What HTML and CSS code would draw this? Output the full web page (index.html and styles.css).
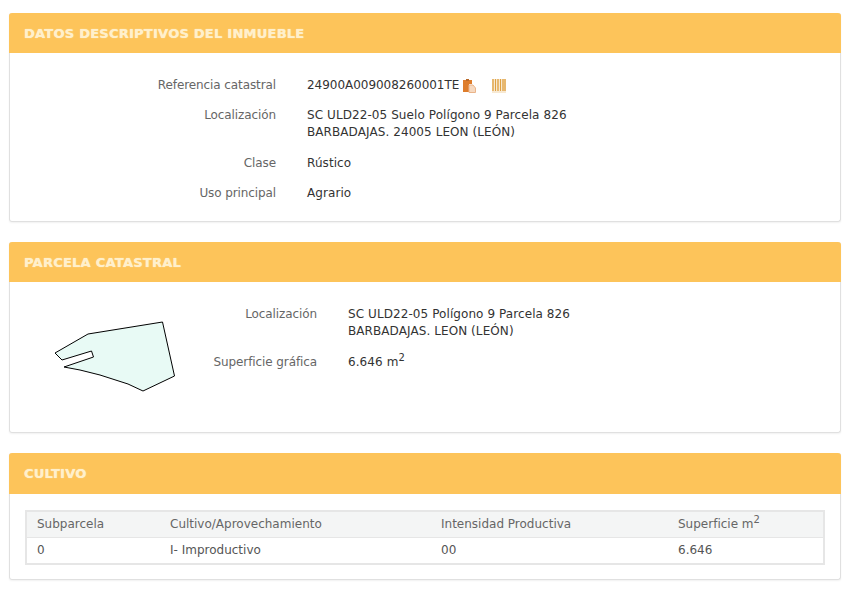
FILE: index.html
```html
<!DOCTYPE html>
<html lang="es">
<head>
<meta charset="UTF-8">
<meta name="viewport" content="width=device-width, initial-scale=1.0">
<title>Datos del inmueble</title>
<link rel="stylesheet" href="styles.css">
</head>
<body>

<!-- Datos descriptivos -->
<section class="panel">
    <h2 class="panel-heading">DATOS DESCRIPTIVOS DEL INMUEBLE</h2>
    <div class="panel-body">
        <dl class="fields fields-wide">
            <dt>Referencia catastral</dt>
            <dd class="ref">24900A009008260001TE
                <svg class="icon icon-copy" width="13" height="14" viewBox="0 0 13 14">
                    <path d="M0 1h9v4H6v8H0z" fill="#de7d2c"/>
                    <path d="M3 0h3v2H3z" fill="#b9692a"/>
                    <path d="M6 6h4l2.500 3v4.500H6z" fill="#f6d9c0" stroke="#eab48a" stroke-width="1"/>
                </svg>
                <svg class="icon icon-barcode" width="14" height="14" viewBox="0 0 14 14">
                    <path d="M1 0v12M3.500 0v12M6 0v12M8.500 0v12M11 0v12M13 0v12" stroke="#dfa040" stroke-width="1.500"/>
                    <path d="M0 13h14" stroke="#f0d3a6" stroke-width="1"/>
                </svg>
            </dd>
            <dt>Localización</dt>
            <dd>SC ULD22-05 Suelo Polígono 9 Parcela 826<br>BARBADAJAS. 24005 LEON (LEÓN)</dd>
            <dt>Clase</dt>
            <dd>Rústico</dd>
            <dt>Uso principal</dt>
            <dd>Agrario</dd>
        </dl>
    </div>
</section>

<!-- Parcela -->
<section class="panel">
    <h2 class="panel-heading">PARCELA CATASTRAL</h2>
    <div class="panel-body parcel">
        <svg class="parcel-map" width="198" height="150" viewBox="10 282 198 150">
            <path d="M162.500 322 L174.500 376 L143 391 L128 384 L100 375 L80 370 L64 367 L93.500 357 L91.500 351 L62 360 L55 353 L88 334 Z" fill="#e8faf5" stroke="#000" stroke-width="1"/>
        </svg>
        <dl class="fields fields-narrow">
            <dt>Localización</dt>
            <dd>SC ULD22-05 Polígono 9 Parcela 826<br>BARBADAJAS. LEON (LEÓN)</dd>
            <dt>Superficie gráfica</dt>
            <dd>6.646 m<sup>2</sup></dd>
        </dl>
    </div>
</section>

<!-- Cultivo -->
<section class="panel">
    <h2 class="panel-heading panel-heading-tall">CULTIVO</h2>
    <div class="panel-body crop">
        <table class="crop-table">
            <colgroup>
                <col class="col-sub">
                <col class="col-crop">
                <col class="col-int">
                <col>
            </colgroup>
            <thead>
                <tr>
                    <th>Subparcela</th>
                    <th>Cultivo/Aprovechamiento</th>
                    <th>Intensidad Productiva</th>
                    <th>Superficie m<sup>2</sup></th>
                </tr>
            </thead>
            <tbody>
                <tr>
                    <td>0</td>
                    <td>I- Improductivo</td>
                    <td>00</td>
                    <td>6.646</td>
                </tr>
            </tbody>
        </table>
    </div>
</section>

</body>
</html>
```

FILE: styles.css
```css
body {
    margin: 0;
    padding: 13px 13px 12px 9px;
    background-color: #fff;
    font-family: "DejaVu Sans", Verdana, sans-serif;
    font-size: 12px;
    line-height: 17px;
    color: #333;
}

.panel {
    margin-bottom: 20px;
    border: 1px solid #e0e0e0;
    border-top: none;
    border-radius: 3px;
    box-shadow: 0 1px 2px rgba(0, 0, 0, 0.06);
}

.panel:last-child {
    margin-bottom: 0;
}

.panel-heading {
    margin: 0 -1px;
    padding: 0 15px;
    height: 40px;
    border-radius: 3px 3px 0 0;
    background-color: #fdc45a;
    color: #fff0cc;
    font-size: 13px;
    font-weight: bold;
    letter-spacing: 0.25px;
    line-height: 41px;
    text-shadow: 0 0 1px #fff0cc;
}

.panel-heading-tall {
    height: 41px;
}

.panel-body {
    padding: 24px 0 18.800px;
}

.fields {
    display: grid;
    column-gap: 31px;
    row-gap: 13.400px;
    margin: 0;
}

.fields-wide {
    grid-template-columns: 266px 1fr;
}

.fields-narrow {
    flex: 1;
    grid-template-columns: 109px 1fr;
    align-content: start;
    row-gap: 14px;
    padding-top: 24px;
}

.fields dt {
    text-align: right;
    color: #666;
    letter-spacing: -0.1px;
}

.fields dd {
    margin: 0;
    letter-spacing: 0.08px;
}

sup {
    font-size: 10px;
    line-height: 0;
}

.fields .ref {
    display: flex;
    align-items: center;
    letter-spacing: -0.03px;
}

.icon-copy {
    margin-left: 4px;
}

.icon-barcode {
    margin-left: 16px;
}

.parcel {
    display: flex;
    padding: 0;
}

.parcel-map {
    display: block;
    flex-shrink: 0;
}

.crop {
    padding: 16px 15px 14px;
}

.crop-table {
    width: 100%;
    border: 2px solid #e6e6e6;
    border-collapse: collapse;
    table-layout: fixed;
}

.crop-table th,
.crop-table td {
    height: 25px;
    padding: 0 0 0 10px;
    text-align: left;
    font-weight: normal;
}

.crop-table th {
    background-color: #f4f5f5;
    border-bottom: 1px solid #e6e6e6;
    color: #666;
}

.crop-table td {
    color: #555;
}

.col-sub {
    width: 134px;
}

.col-crop {
    width: 271px;
}

.col-int {
    width: 237px;
}
```
